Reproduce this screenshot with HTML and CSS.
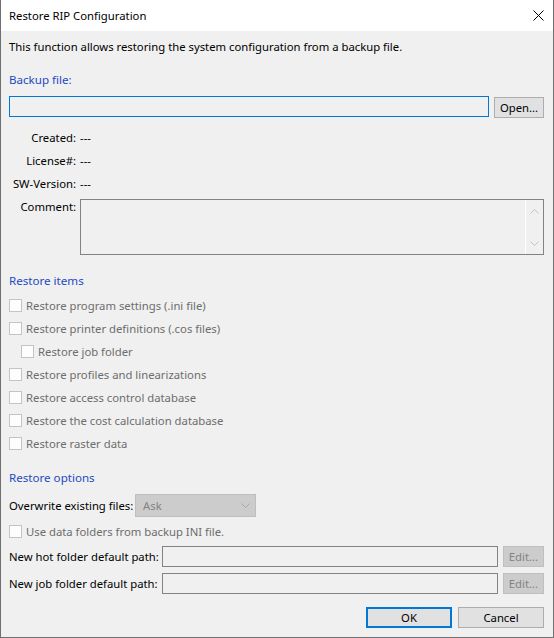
FILE: index.html
```html
<!DOCTYPE html>
<html lang="en">
<head>
    <meta charset="UTF-8">
    <title>Restore RIP Configuration</title>
    <link rel="stylesheet" href="styles.css">
</head>
<body>
    <div class="dialog">
        <div class="titlebar">
            <span class="title">Restore RIP Configuration</span>
            <svg class="close" width="11" height="11" viewBox="0 0 11 11">
                <path d="M0.5 0.5 L10.5 10.5 M10.5 0.5 L0.5 10.5" stroke="#000" stroke-width="1" fill="none"/>
            </svg>
        </div>

        <div class="client">
            <p class="intro">This function allows restoring the system configuration from a backup file.</p>

            <div class="heading backup">Backup file:</div>
            <div class="file-row">
                <input class="field focused" type="text" readonly>
                <button class="btn open">Open...</button>
            </div>

            <div class="info">
                <span class="key">Created:</span><span>---</span>
                <span class="key">License#:</span><span>---</span>
                <span class="key">SW-Version:</span><span>---</span>
            </div>
            <div class="comment-row">
                <span class="key">Comment:</span>
                <div class="memo">
                    <div class="scroll">
                        <svg width="9" height="5" viewBox="0 0 9 5"><path d="M0.5 4.5 L4.5 0.5 L8.5 4.5" stroke="#c2c2c2" fill="none"/></svg>
                        <svg width="9" height="5" viewBox="0 0 9 5"><path d="M0.5 0.5 L4.5 4.5 L8.5 0.5" stroke="#c2c2c2" fill="none"/></svg>
                    </div>
                </div>
            </div>

            <div class="heading items">Restore items</div>
            <div class="checks">
                <label class="check"><span class="box"></span>Restore program settings (.ini file)</label>
                <label class="check"><span class="box"></span>Restore printer definitions (.cos files)</label>
                <label class="check sub"><span class="box"></span>Restore job folder</label>
                <label class="check"><span class="box"></span>Restore profiles and linearizations</label>
                <label class="check"><span class="box"></span>Restore access control database</label>
                <label class="check"><span class="box"></span>Restore the cost calculation database</label>
                <label class="check"><span class="box"></span>Restore raster data</label>
            </div>

            <div class="heading options">Restore options</div>
            <div class="combo-row">
                <span class="combo-label">Overwrite existing files:</span>
                <div class="combo">
                    <span>Ask</span>
                    <svg width="9" height="5" viewBox="0 0 9 5"><path d="M0.5 0.5 L4.5 4.5 L8.5 0.5" stroke="#a6a6a6" fill="none"/></svg>
                </div>
            </div>
            <label class="check use-data"><span class="box"></span>Use data folders from backup INI file.</label>

            <div class="path-row hot">
                <span class="path-label">New hot folder default path:</span>
                <input class="field" type="text" disabled>
                <button class="btn edit" disabled>Edit...</button>
            </div>
            <div class="path-row job">
                <span class="path-label">New job folder default path:</span>
                <input class="field" type="text" disabled>
                <button class="btn edit" disabled>Edit...</button>
            </div>

            <div class="actions">
                <button class="btn action default">OK</button>
                <button class="btn action">Cancel</button>
            </div>
        </div>
    </div>
</body>
</html>
```

FILE: styles.css
```css
body {
    margin: 0;
    font-family: 'Noto Sans', 'Open Sans', sans-serif;
    font-size: 11.3px;
    color: #000;
    background: #f0f0f0;
    white-space: nowrap;
}

.dialog {
    width: 554px;
    height: 638px;
    box-sizing: border-box;
    border: 1px solid #6f6f6f;
    border-top: none;
    background: #f0f0f0;
}

.titlebar {
    height: 31px;
    background: #fff;
    display: flex;
    align-items: center;
    justify-content: space-between;
    padding: 0 9px 0 8px;
}

.client {
    padding: 0 9px 0 8px;
}

.intro {
    margin: 8px 0 0;
    line-height: 16px;
}

.heading {
    color: #1f4ac0;
    line-height: 16px;
    font-size: 11.6px;
}

.heading.backup {
    margin-top: 17px;
}

.heading.items {
    margin-top: 18px;
}

.heading.options {
    margin-top: 15px;
}

.field {
    box-sizing: border-box;
    height: 21px;
    min-width: 0;
    margin: 0;
    padding: 0 3px;
    border: 1px solid #838383;
    background: #f0f0f0;
    font: inherit;
    outline: none;
}

.field.focused {
    border-color: #0078d7;
}

.btn {
    box-sizing: border-box;
    height: 21px;
    margin: 0;
    padding: 0;
    border: 1px solid #adadad;
    background: #e1e1e1;
    font: inherit;
    color: #000;
}

.btn:disabled {
    background: #cccccc;
    border-color: #bfbfbf;
    color: #838383;
}

.file-row {
    display: flex;
    margin-top: 8px;
    height: 21px;
}

.file-row .field {
    flex: 1;
    margin-right: 5px;
}

.btn.open {
    width: 50px;
    margin-top: 1px;
}

.info {
    display: grid;
    grid-template-columns: 67px 1fr;
    column-gap: 4px;
    grid-auto-rows: 23px;
    line-height: 23px;
    margin-top: 9px;
}

.key {
    text-align: right;
}

.comment-row {
    display: grid;
    grid-template-columns: 67px 1fr;
    column-gap: 4px;
    line-height: 16px;
    margin-top: 4px;
}

.memo {
    height: 56px;
    box-sizing: border-box;
    border: 1px solid #838383;
    display: flex;
    justify-content: flex-end;
}

.scroll {
    width: 17px;
    border-left: 1px solid #fff;
    display: flex;
    flex-direction: column;
    justify-content: space-between;
    align-items: center;
    padding: 9px 0 8px;
}

.checks {
    margin-top: 5px;
}

.check {
    display: flex;
    align-items: center;
    height: 23px;
    color: #6d6d6d;
}

.check.sub {
    padding-left: 12px;
}

.box {
    width: 13px;
    height: 13px;
    box-sizing: border-box;
    border: 1px solid #c4c4c4;
    background: #fdfdfd;
    margin-right: 4px;
}

.combo-row {
    display: flex;
    align-items: center;
    height: 23px;
    margin-top: 8px;
}

.combo-label {
    width: 126px;
}

.combo {
    width: 121px;
    height: 23px;
    box-sizing: border-box;
    border: 1px solid #bfbfbf;
    background: #cccccc;
    color: #838383;
    display: flex;
    align-items: center;
    justify-content: space-between;
    padding: 0 5px 0 7px;
}

.check.use-data {
    margin-top: 3px;
}

.path-row {
    display: flex;
    align-items: center;
    height: 21px;
}

.path-row.hot {
    margin-top: 3px;
}

.path-row.job {
    margin-top: 6px;
}

.path-label {
    width: 153px;
}

.path-row .field {
    flex: 1;
    margin-right: 5px;
}

.btn.edit {
    width: 41px;
}

.actions {
    display: flex;
    justify-content: flex-end;
    gap: 6px;
    margin-top: 13px;
}

.btn.action {
    width: 86px;
}

.btn.default {
    border: 2px solid #0078d7;
}
```
